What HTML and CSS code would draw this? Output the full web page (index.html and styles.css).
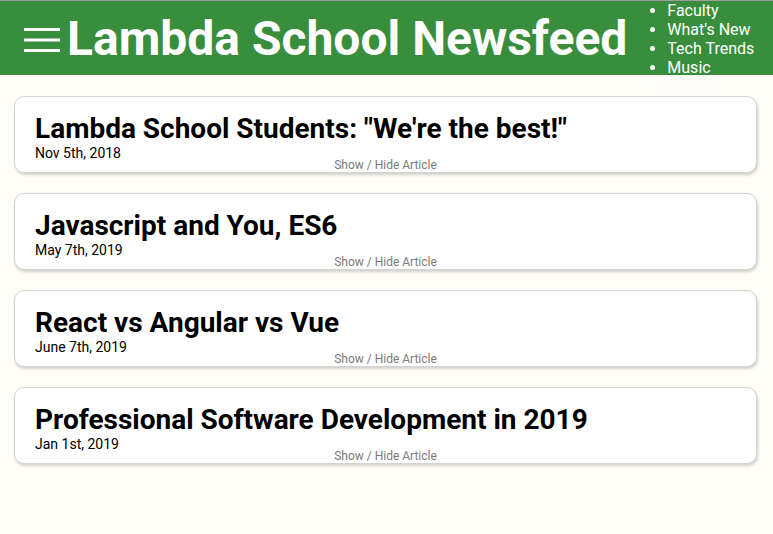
FILE: index.html
```html
<!DOCTYPE html>
<html>
<head>
<meta charset="utf-8">
<title>Lambda School Newsfeed</title>
<link rel="stylesheet" href="styles.css">
</head>
<body>
<header class="header">
  <svg class="menu-button" width="36" height="24" viewBox="0 0 36 24" aria-hidden="true">
    <rect x="0" y="0" width="36" height="3" fill="#fff"/>
    <rect x="0" y="10.5" width="36" height="3" fill="#fff"/>
    <rect x="0" y="21" width="36" height="3" fill="#fff"/>
  </svg>
  <h1 class="header-title">Lambda School Newsfeed</h1>
  <ul class="menu">
    <li>Faculty</li>
    <li>What's New</li>
    <li>Tech Trends</li>
    <li>Music</li>
    <li>Log Out</li>
  </ul>
</header>
<main class="articles">
  <article class="article">
    <h2 class="article-title">Lambda School Students: "We're the best!"</h2>
    <p class="date">Nov 5th, 2018</p>
    <span class="expand-button">Show / Hide Article</span>
  </article>
  <article class="article">
    <h2 class="article-title">Javascript and You, ES6</h2>
    <p class="date">May 7th, 2019</p>
    <span class="expand-button">Show / Hide Article</span>
  </article>
  <article class="article">
    <h2 class="article-title">React vs Angular vs Vue</h2>
    <p class="date">June 7th, 2019</p>
    <span class="expand-button">Show / Hide Article</span>
  </article>
  <article class="article">
    <h2 class="article-title">Professional Software Development in 2019</h2>
    <p class="date">Jan 1st, 2019</p>
    <span class="expand-button">Show / Hide Article</span>
  </article>
</main>
</body>
</html>
```

FILE: styles.css
```css
* {
  box-sizing: border-box;
}

html, body {
  margin: 0;
  padding: 0;
}

body {
  background: #fffdf7;
  font-family: Roboto, "Liberation Sans", Arial, sans-serif;
  color: #000;
  border-top: 1px solid #9e9e9e;
}

.header {
  display: flex;
  align-items: center;
  height: 74px;
  background: #388e3c;
  padding-left: 24px;
  color: #fff;
}

.menu-button {
  flex: none;
  display: block;
  margin-top: 3px;
}

.header-title {
  margin: 0 0 0 7px;
  font-size: 48px;
  font-weight: 700;
  line-height: normal;
  white-space: nowrap;
}

.menu {
  align-self: flex-start;
  margin: 0;
  padding-left: 40px;
  font-size: 16px;
  line-height: normal;
  white-space: nowrap;
}

.articles {
  display: flex;
  flex-direction: column;
  gap: 20px;
  padding: 21px 16px 20px 14px;
}

.article {
  position: relative;
  height: 77px;
  overflow: hidden;
  background: #fff;
  border: 1px solid #d3d3d3;
  border-radius: 10px;
  box-shadow: 1px 2px 3px rgba(0, 0, 0, 0.18);
  padding: 15px 20px 0;
}

.article-title {
  margin: 0;
  font-size: 28px;
  font-weight: 700;
  line-height: normal;
}

.date {
  margin: 0;
  font-size: 14px;
  line-height: normal;
}

.expand-button {
  position: absolute;
  left: 0;
  right: 0;
  bottom: 0;
  text-align: center;
  font-size: 12px;
  color: #7a7a7a;
  line-height: normal;
}
```
